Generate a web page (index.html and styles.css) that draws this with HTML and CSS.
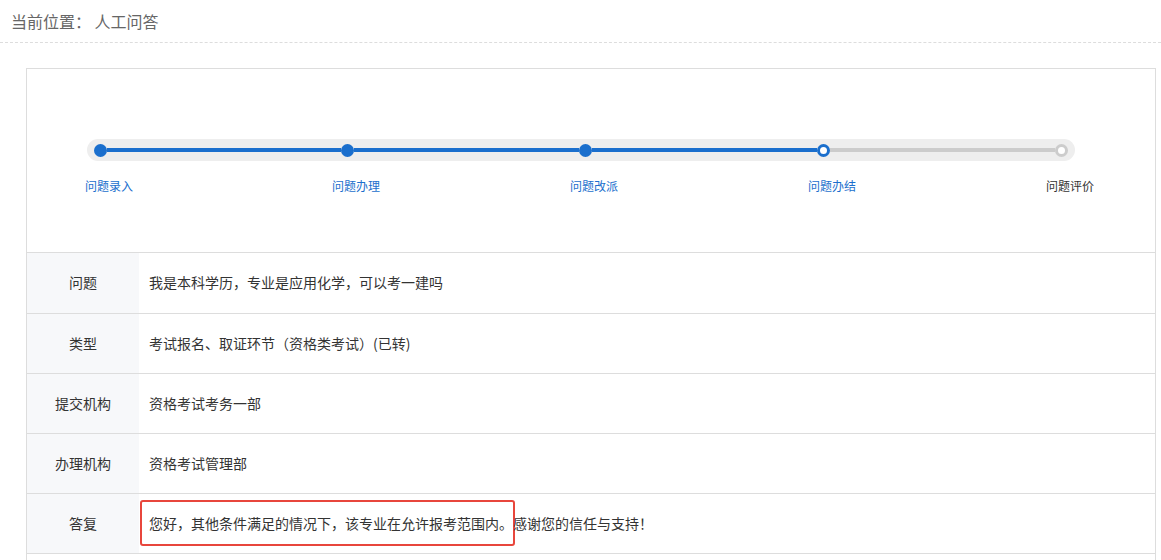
FILE: index.html
```html
<!DOCTYPE html>
<html lang="zh-CN">

<head>
    <meta charset="UTF-8">
    <meta name="viewport" content="width=device-width, initial-scale=1.0">
    <title>人工问答</title>
    <link rel="stylesheet" href="styles.css">
</head>

<body>
    <div class="crumb">当前位置： 人工问答</div>

    <div class="panel">
        <!-- 进度 -->
        <div class="steps">
            <div class="track">
                <span class="dot done"></span>
                <span class="seg done s1"></span>
                <span class="dot done"></span>
                <span class="seg done"></span>
                <span class="dot done"></span>
                <span class="seg done"></span>
                <span class="dot current"></span>
                <span class="seg"></span>
                <span class="dot"></span>
            </div>
            <div class="labels">
                <span class="label done l1">问题录入</span>
                <span class="label done">问题办理</span>
                <span class="label done">问题改派</span>
                <span class="label done">问题办结</span>
                <span class="label last">问题评价</span>
            </div>
        </div>

        <!-- 详情 -->
        <div class="row first">
            <div class="key">问题</div>
            <div class="val">我是本科学历，专业是应用化学，可以考一建吗</div>
        </div>
        <div class="row">
            <div class="key">类型</div>
            <div class="val">考试报名、取证环节（资格类考试）(已转)</div>
        </div>
        <div class="row">
            <div class="key">提交机构</div>
            <div class="val">资格考试考务一部</div>
        </div>
        <div class="row">
            <div class="key">办理机构</div>
            <div class="val">资格考试管理部</div>
        </div>
        <div class="row">
            <div class="key">答复</div>
            <div class="val"><span class="mark">您好，其他条件满足的情况下，该专业在允许报考范围内。</span>感谢您的信任与支持！</div>
        </div>
        <div class="row"></div>
    </div>
</body>

</html>
```

FILE: styles.css
```css
* {
    margin: 0;
    padding: 0;
    box-sizing: border-box;
}

body {
    font-family: "Microsoft YaHei", "Noto Sans CJK SC", sans-serif;
    background: #fff;
    color: #333;
}

/* 面包屑 */
.crumb {
    height: 43px;
    line-height: 42px;
    padding-left: 11px;
    font-size: 16px;
    color: #666;
    border-bottom: 1px dashed #ddd;
}

.panel {
    margin: 25px 5px 0 26px;
    border: 1px solid #ddd;
    border-bottom: none;
}

/* 进度条 */
.steps {
    height: 184px;
    padding: 70px 0 0 60px;
    border-bottom: 1px solid #ddd;
}

.track {
    display: flex;
    align-items: center;
    width: 988px;
    height: 22px;
    padding: 0 7px;
    background: #eee;
    border-radius: 11px;
}

.dot {
    width: 13px;
    height: 13px;
    flex: none;
    border-radius: 50%;
    background: #fff;
    border: 3px solid #ccc;
}

.dot.done {
    background: #1b6fcd;
    border-color: #1b6fcd;
}

.dot.current {
    background: #fff;
    border-color: #1b6fcd;
}

.seg {
    width: 225px;
    height: 4px;
    flex: none;
    background: #ccc;
}

.seg.done {
    background: #1b6fcd;
}

.seg.s1 {
    width: 234px;
}

.labels {
    display: flex;
    margin: 16px 0 0 -2px;
    font-size: 12px;
    line-height: 17px;
}

.label {
    width: 238px;
    flex: none;
    color: #333;
}

.label.l1 {
    width: 247px;
}

.label.last {
    width: auto;
}

.label.done {
    color: #1b6fcd;
}

/* 表格 */
.row {
    display: flex;
    height: 60px;
    border-bottom: 1px solid #ddd;
    font-size: 14px;
}

.row.first {
    height: 61px;
}

.key {
    width: 112px;
    flex: none;
    display: flex;
    align-items: center;
    justify-content: center;
    padding-bottom: 2px;
    background: #f7f8fa;
}

.val {
    flex: 1;
    display: flex;
    align-items: center;
    padding: 0 0 2px 10px;
}

/* 红框标注 */
.mark {
    display: inline-block;
    line-height: 20px;
    padding: 11px 0 11px 7px;
    margin: 0 -2px 0 -9px;
    border: 2px solid #e8463c;
    border-radius: 3px;
}
```
